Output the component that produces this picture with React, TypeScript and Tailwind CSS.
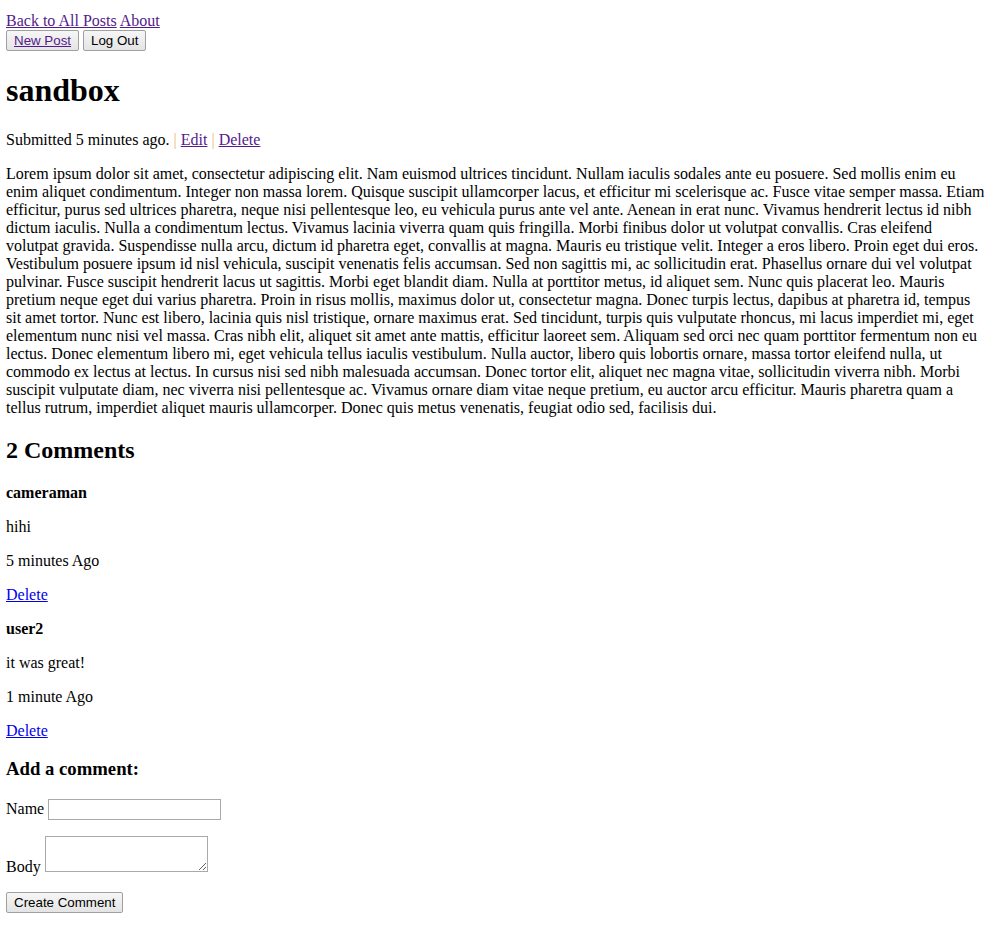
const LOREM =
  'Lorem ipsum dolor sit amet, consectetur adipiscing elit. Nam euismod ultrices tincidunt. Nullam iaculis sodales ante eu posuere. Sed mollis enim eu enim aliquet condimentum. Integer non massa lorem. Quisque suscipit ullamcorper lacus, et efficitur mi scelerisque ac. Fusce vitae semper massa. Etiam efficitur, purus sed ultrices pharetra, neque nisi pellentesque leo, eu vehicula purus ante vel ante. Aenean in erat nunc. Vivamus hendrerit lectus id nibh dictum iaculis. Nulla a condimentum lectus. Vivamus lacinia viverra quam quis fringilla. Morbi finibus dolor ut volutpat convallis. Cras eleifend volutpat gravida. Suspendisse nulla arcu, dictum id pharetra eget, convallis at magna. Mauris eu tristique velit. Integer a eros libero. Proin eget dui eros. Vestibulum posuere ipsum id nisl vehicula, suscipit venenatis felis accumsan. Sed non sagittis mi, ac sollicitudin erat. Phasellus ornare dui vel volutpat pulvinar. Fusce suscipit hendrerit lacus ut sagittis. Morbi eget blandit diam. Nulla at porttitor metus, id aliquet sem. Nunc quis placerat leo. Mauris pretium neque eget dui varius pharetra. Proin in risus mollis, maximus dolor ut, consectetur magna. Donec turpis lectus, dapibus at pharetra id, tempus sit amet tortor. Nunc est libero, lacinia quis nisl tristique, ornare maximus erat. Sed tincidunt, turpis quis vulputate rhoncus, mi lacus imperdiet mi, eget elementum nunc nisi vel massa. Cras nibh elit, aliquet sit amet ante mattis, efficitur laoreet sem. Aliquam sed orci nec quam porttitor fermentum non eu lectus. Donec elementum libero mi, eget vehicula tellus iaculis vestibulum. Nulla auctor, libero quis lobortis ornare, massa tortor eleifend nulla, ut commodo ex lectus at lectus. In cursus nisi sed nibh malesuada accumsan. Donec tortor elit, aliquet nec magna vitae, sollicitudin viverra nibh. Morbi suscipit vulputate diam, nec viverra nisi pellentesque ac. Vivamus ornare diam vitae neque pretium, eu auctor arcu efficitur. Mauris pharetra quam a tellus rutrum, imperdiet aliquet mauris ullamcorper. Donec quis metus venenatis, feugiat odio sed, facilisis dui.'

const comments = [
  { user: 'cameraman', body: 'hihi', when: '5 minutes Ago' },
  { user: 'user2', body: 'it was great!', when: '1 minute Ago' },
]

const visited = 'text-[#551a8b] underline'
const link = 'text-[#0000ee] underline'
const btn =
  "inline-block rounded-[2px] border border-[#a0a0a0] bg-gradient-to-b from-[#f6f6f6] to-[#e4e4e4] px-[7px] py-[2px] align-baseline font-['Liberation_Sans',Arial,sans-serif] text-[13.33px] text-black leading-[normal]"

export default function App() {
  return (
    <div className="mt-3 mr-[6px] mb-2 ml-[6px] bg-white font-['Liberation_Serif','Times_New_Roman',serif] text-[16px] leading-[normal] text-black">
      <div>
        <a href="#" className={visited}>
          Back to All Posts
        </a>{' '}
        <a href="#" className={visited}>
          About
        </a>
      </div>
      <div>
        <button className={btn}>
          <a href="#" className={visited}>
            New Post
          </a>
        </button>{' '}
        <button className={btn}>Log Out</button>
      </div>

      <h1 className="my-[21.44px] text-[32px] font-bold">sandbox</h1>
      <p className="my-4">
        Submitted 5 minutes ago. <span className="text-[#f0b870]">|</span>{' '}
        <a href="#" className={visited}>
          Edit
        </a>{' '}
        <span className="text-[#f0b870]">|</span>{' '}
        <a href="#" className={visited}>
          Delete
        </a>
      </p>
      <p className="my-4">{LOREM}</p>

      <h2 className="my-[19.92px] text-[24px] font-bold">2 Comments</h2>
      {comments.map((c) => (
        <div key={c.user}>
          <p className="my-4">
            <strong className="font-bold">{c.user}</strong>
          </p>
          <p className="my-4">{c.body}</p>
          <p className="my-4">{c.when}</p>
          <p className="my-4">
            <a href="#" className={link}>
              Delete
            </a>
          </p>
        </div>
      ))}

      <h3 className="my-[18.72px] text-[18.72px] font-bold">Add a comment:</h3>
      <form onSubmit={(e) => e.preventDefault()}>
        <p className="my-4">
          <label>Name</label>{' '}
          <input
            type="text"
            className="h-[21px] w-[173px] border border-[#a9a9a9] bg-white px-[2px] align-baseline font-['Liberation_Sans',Arial,sans-serif] text-[13.33px]"
          />
        </p>
        <p className="my-4">
          <label>Body</label>{' '}
          <textarea className="h-[36px] w-[163px] resize border border-[#a9a9a9] bg-white p-[2px] align-baseline font-['Liberation_Mono',monospace] text-[13.33px]" />
        </p>
        <p className="my-4">
          <button type="submit" className={btn}>
            Create Comment
          </button>
        </p>
      </form>
    </div>
  )
}
